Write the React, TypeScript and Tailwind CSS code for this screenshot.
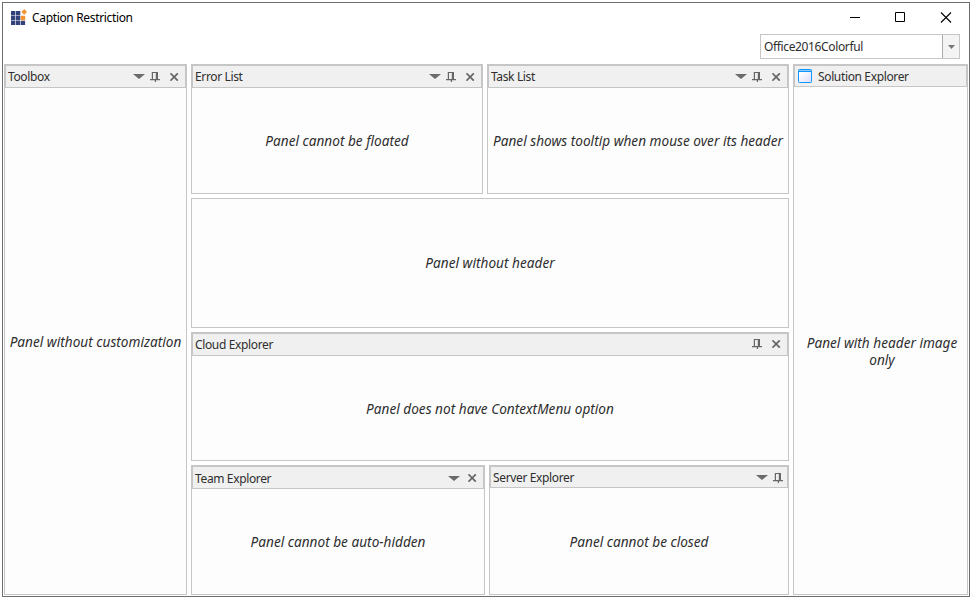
import type { ReactNode } from "react";

const ui = "font-['Noto_Sans','Open_Sans',sans-serif]";

function Arrow() {
  return (
    <svg className="block" width="12" height="5" viewBox="0 0 12 5">
      <path d="M0 0H12L6 5Z" fill="#6a6a6a" />
    </svg>
  );
}

function Pin() {
  return (
    <svg className="block" width="10" height="10" viewBox="0 0 10 10" fill="#666">
      <path d="M1.8 0H8V7H10V8.2H6V10H4.8V8.2H0V7H1.8ZM3 1.1V7H5.8V1.1Z" fillRule="evenodd" />
    </svg>
  );
}

function Cross() {
  return (
    <svg className="block" width="9" height="8" viewBox="0 0 9 8">
      <path d="M0.4 0.3L7.8 7.7M7.8 0.3L0.4 7.7" stroke="#666" strokeWidth="1.7" />
    </svg>
  );
}

function WindowIcon() {
  return (
    <svg className="block" width="14" height="14" viewBox="0 0 14 14">
      <defs>
        <linearGradient id="pane" x1="0" y1="0" x2="1" y2="1">
          <stop offset="0.2" stopColor="#fff" />
          <stop offset="1" stopColor="#dcdcfa" />
        </linearGradient>
      </defs>
      <rect x="0.5" y="0.5" width="13" height="13" rx="0.8" fill="url(#pane)" stroke="#0f96ff" />
      <path d="M1 1.5H13" stroke="#8cc8f8" />
      <path d="M1 2.5H13" stroke="#0f96ff" />
    </svg>
  );
}

type PanelProps = {
  className: string;
  title?: string;
  titleClass?: string;
  headerClass?: string;
  bodyClass: string;
  icon?: ReactNode;
  tools?: ReactNode;
  children: ReactNode;
};

function Panel({ className, title, titleClass = "", headerClass = "h-[24px]", bodyClass, icon, tools, children }: PanelProps) {
  return (
    <section className={`flex min-w-0 flex-col bg-[#fdfdfd] ${className}`}>
      {title && (
        <header className={`flex shrink-0 items-start border-2 border-b border-[#c6c6c6] bg-[#f0f0f0] ${headerClass}`}>
          {icon}
          <h2 className={`whitespace-nowrap text-[12px] leading-[16px] tracking-[-0.36px] text-[#2e2e2e] ${titleClass}`}>{title}</h2>
          <div className="ml-auto flex items-start">{tools}</div>
        </header>
      )}
      <div className={`flex flex-1 justify-center border border-[#c6c6c6] text-center text-[13.6px] italic leading-[17px] tracking-[0.02px] text-[#2e2e2e] ${title ? "border-t-0" : ""} ${bodyClass}`}>
        {children}
      </div>
    </section>
  );
}

function FullTools() {
  return (
    <>
      <div className="mr-[5px] mt-[8px]"><Arrow /></div>
      <div className="mr-[10px] mt-[6px]"><Pin /></div>
      <div className="mr-[6px] mt-[7px]"><Cross /></div>
    </>
  );
}

export default function App() {
  return (
    <div className={`h-[599px] w-[972px] bg-white pl-[2px] pt-[2px] ${ui}`}>
      <main className="flex h-[595px] w-[968px] flex-col border border-[#6e6e6e] bg-white pb-px pl-px pr-px">
        <div className="flex h-[31px] items-start">
          <svg className="ml-[7px] mt-[6px]" width="16" height="17" viewBox="0 0 16 17">
            <path fill="#34427c" d="M0 2h4.4v4.2H0zM5 2h4.3v4.2H5zM0 6.8h4.4v4.4H0zM5 6.8h4.3v4.4H5zM0 11.8h4.4v4.2H0zM5 11.8h4.3v4.2H5zM9.9 11.8h4.2v4.2H9.9z" />
            <path fill="#f39434" d="M9.9 6.8H14.2V11.2H9.9zM13.2 0.1L16 2.9L13.2 5.7L10.4 2.9Z" />
          </svg>
          <h1 className="ml-[5px] mt-[7px] whitespace-nowrap text-[12px] leading-[16px] tracking-[-0.34px] text-black">Caption Restriction</h1>
          <svg className="ml-auto mr-[16px] mt-[9px]" width="103" height="11" viewBox="0 0 103 11" fill="none" stroke="#000">
            <path d="M1 5.5h10M46.5 0.5h9v9h-9z" />
            <path d="M92 0.5l10 10M102 0.5l-10 10" strokeWidth="1.1" />
          </svg>
        </div>
        <div className="ml-auto mr-[8px] flex h-[25px] w-[200px] border border-[#c6c6c6] bg-white">
          <span className="flex-1 pl-[3px] pt-[4px] text-[12px] leading-[16px] tracking-[-0.36px] text-[#2e2e2e]">Office2016Colorful</span>
          <span className="flex w-[17px] items-center justify-center border-l border-[#ababab] bg-[#f4f4f4]">
            <svg width="7" height="4" viewBox="0 0 7 4"><path d="M0 0H7L3.5 4Z" fill="#777" /></svg>
          </span>
        </div>
        <div className="mt-[5px] flex h-[531px] gap-[4px]">
          <Panel className="w-[183px]" title="Toolbox" titleClass="pl-[2px] pt-[3px]" bodyClass="pt-[245px] whitespace-nowrap" tools={<FullTools />}>
            <p>Panel without customization</p>
          </Panel>
          <div className="flex w-[598px] flex-col gap-[4px]">
            <div className="flex h-[130px] gap-[4px]">
              <Panel className="w-[292px]" title="Error List" titleClass="pl-[2px] pt-[3px]" bodyClass="pt-[44px]" tools={<FullTools />}>
                <p>Panel cannot be floated</p>
              </Panel>
              <Panel className="w-[302px]" title="Task List" titleClass="pl-[2px] pt-[3px]" bodyClass="pt-[44px] whitespace-nowrap" tools={<FullTools />}>
                <p>Panel shows tooltip when mouse over its header</p>
              </Panel>
            </div>
            <Panel className="h-[130px]" bodyClass="pt-[55px]">
              <p>Panel without header</p>
            </Panel>
            <Panel
              className="h-[129px]"
              title="Cloud Explorer"
              titleClass="pl-[2px] pt-[3px]"
              bodyClass="pt-[44px]"
              tools={
                <>
                  <div className="mr-[10px] mt-[5px]"><Pin /></div>
                  <div className="mr-[6px] mt-[6px]"><Cross /></div>
                </>
              }
            >
              <p>Panel does not have ContextMenu option</p>
            </Panel>
            <div className="flex h-[130px] gap-[4px]">
              <Panel
                className="w-[294px]"
                title="Team Explorer"
                titleClass="pl-[2px] pt-[4px]"
                bodyClass="pt-[44px]"
                tools={
                  <>
                    <div className="mr-[8px] mt-[9px]"><Arrow /></div>
                    <div className="mr-[6px] mt-[7px]"><Cross /></div>
                  </>
                }
              >
                <p>Panel cannot be auto-hidden</p>
              </Panel>
              <Panel
                className="w-[300px]"
                title="Server Explorer"
                headerClass="h-[23px]"
                titleClass="pl-[2px] pt-[3px]"
                bodyClass="pt-[45px]"
                tools={
                  <>
                    <div className="mr-[5px] mt-[8px]"><Arrow /></div>
                    <div className="mr-[4px] mt-[6px]"><Pin /></div>
                  </>
                }
              >
                <p>Panel cannot be closed</p>
              </Panel>
            </div>
          </div>
          <Panel
            className="w-[175px]"
            title="Solution Explorer"
            headerClass="h-[23px]"
            titleClass="pl-[6px] pt-[3px]"
            bodyClass="pt-[247px] pl-[3px] whitespace-nowrap"
            icon={<div className="ml-[3px] mt-[3px]"><WindowIcon /></div>}
          >
            <p>Panel with header image<br />only</p>
          </Panel>
        </div>
      </main>
    </div>
  );
}
